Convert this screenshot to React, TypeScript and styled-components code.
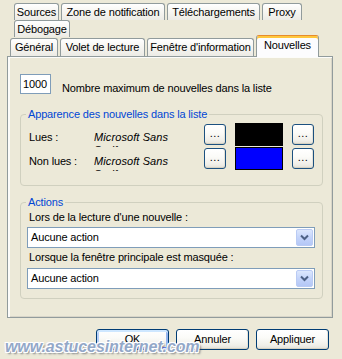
import React from "react";
import styled, { createGlobalStyle } from "styled-components";

const Global = createGlobalStyle`
  html, body { margin: 0; padding: 0; background: #ECE9D8; }
  body { font-family: "Liberation Sans", Arial, sans-serif; font-size: 11px; color: #000; letter-spacing: -0.15px; }
  * { box-sizing: border-box; }
`;

const Dialog = styled.div`
  position: relative;
  width: 342px;
  height: 359px;
  background: #ECE9D8;
  padding-top: 3px;
  overflow: hidden;
`;

const TabRow = styled.div<{ $left: number; $front?: boolean }>`
  display: flex;
  align-items: flex-end;
  gap: 2px;
  padding-left: ${(p) => p.$left}px;
  height: ${(p) => (p.$front ? 21 : 17)}px;
  margin-top: ${(p) => (p.$front ? -2 : 0)}px;
  position: relative;
  z-index: ${(p) => (p.$front ? 2 : 1)};
`;

const Tab = styled.div<{ $w: number; $h?: number }>`
  width: ${(p) => p.$w}px;
  height: ${(p) => p.$h ?? 17}px;
  border: 1px solid #919B9C;
  border-bottom: none;
  border-radius: 3px 3px 0 0;
  background: linear-gradient(180deg, #FFFFFF 0%, #F7F6F2 45%, #ECEBE5 100%);
  display: flex;
  align-items: center;
  justify-content: center;
  line-height: 13px;
  white-space: nowrap;
`;

const ActiveTab = styled.div<{ $w: number }>`
  width: ${(p) => p.$w}px;
  height: 22px;
  margin-bottom: -1px;
  border: 1px solid #919B9C;
  border-top: 1px solid #E68B2C;
  border-bottom: none;
  border-radius: 3px 3px 0 0;
  box-shadow: inset 0 2px 0 #FFC73C;
  background: #FCFCFE;
  display: flex;
  justify-content: center;
  padding-top: 3px;
  line-height: 13px;
  white-space: nowrap;
`;

const Panel = styled.div`
  margin-left: 7px;
  width: 326px;
  height: 262px;
  border: 1px solid #919B9C;
  box-shadow: inset 2px 1px 0 #FCFCFA, inset -1px -1px 0 #D8D5C8;
  background: #ECE9D8;
`;

const MaxRow = styled.div`
  display: flex;
  align-items: flex-start;
  padding: 17px 0 0 12px;
`;

const NumberBox = styled.div`
  width: 31px;
  height: 20px;
  border: 1px solid #7F9DB9;
  background: #fff;
  padding: 2px 0 0 2px;
  line-height: 14px;
`;

const Label = styled.div<{ $top?: number; $left?: number }>`
  margin-top: ${(p) => p.$top ?? 0}px;
  margin-left: ${(p) => p.$left ?? 0}px;
  line-height: 13px;
  white-space: nowrap;
`;

const Group = styled.fieldset<{ $top: number; $pl: number; $pr: number; $pb: number }>`
  margin: ${(p) => p.$top}px 9px 0 12px;
  border: 1px solid #D0D0BF;
  border-radius: 4px;
  padding: 2px ${(p) => p.$pr}px ${(p) => p.$pb}px ${(p) => p.$pl}px;
  min-width: 0;
`;

const Legend = styled.legend<{ $ml: number }>`
  color: #0046D5;
  line-height: 14px;
  padding: 0 2px;
  margin-left: ${(p) => p.$ml}px;
`;

const StyleGrid = styled.div`
  display: grid;
  grid-template-columns: 65px 110px 31px 57px 22px;
  grid-auto-rows: 23px;
  row-gap: 1px;
`;

const RowLabel = styled.div`
  padding-top: 8px;
  line-height: 13px;
  white-space: nowrap;
`;

const FontName = styled.div`
  margin-top: 8px;
  width: 80px;
  height: 16px;
  overflow: hidden;
  font-style: italic;
  line-height: 13px;
  letter-spacing: 0.1px;
`;

const XPButton = styled.div<{ $w: number; $h: number; $default?: boolean }>`
  width: ${(p) => p.$w}px;
  height: ${(p) => p.$h}px;
  border: 1px solid #003C74;
  border-radius: 3px;
  background: linear-gradient(180deg, #FFFFFF 0%, #FBFBF8 40%, #F0EFE9 80%, #E3E1D8 100%);
  box-shadow: ${(p) =>
    p.$default
      ? "inset 0 2px 0 #CEE7FF, inset 0 -2px 0 #6982EE, inset 2px 0 0 #B6CFF8, inset -2px 0 0 #94B4EE"
      : "inset 0 -1px 0 #D6D2C2, inset -1px 0 0 #E4E2D8"};
  display: flex;
  align-items: center;
  justify-content: center;
  line-height: 13px;
`;

const SmallButton = styled(XPButton)`
  margin-top: 1px;
  border-color: #1C5180;
  align-items: flex-end;
  padding-bottom: 4px;
  letter-spacing: 0.5px;
`;

const Swatch = styled.div<{ $color: string }>`
  width: 48px;
  height: 23px;
  background: ${(p) => p.$color};
  border: 1px solid #000;
`;

const Select = styled.div<{ $top: number }>`
  margin-top: ${(p) => p.$top}px;
  height: 21px;
  border: 1px solid #7F9DB9;
  background: #fff;
  display: flex;
  align-items: center;
  justify-content: space-between;
  padding: 0 1px 0 3px;
  line-height: 13px;
`;

const DropButton = styled.div`
  width: 17px;
  height: 17px;
  border-radius: 2px;
  background: linear-gradient(180deg, #DCE7FD 0%, #C4D4FA 50%, #B4C7F6 100%);
  border: 1px solid #BACBF4;
  display: flex;
  align-items: center;
  justify-content: center;
`;

const ButtonBar = styled.div`
  display: flex;
  justify-content: flex-end;
  gap: 7px;
  margin-top: 11px;
  padding-right: 13px;
`;

const Watermark = styled.div`
  position: absolute;
  left: 5px;
  top: 339px;
  font-family: "Liberation Sans", Arial, sans-serif;
  font-size: 16px;
  font-weight: bold;
  font-style: italic;
  letter-spacing: -0.1px;
  line-height: 16px;
  color: #93A8C8;
  text-shadow: -1px -1px 0 #fff, 1px -1px 0 #fff, -1px 1px 0 #fff, 1px 1px 0 #fff,
    0 -1px 0 #fff, 0 1px 0 #fff, 2px 2px 2px rgba(40, 50, 70, 0.55);
  white-space: nowrap;
`;

const Chevron = () => (
  <svg width="9" height="7" viewBox="0 0 9 7">
    <path d="M1 1.5 L4.5 5 L8 1.5" fill="none" stroke="#4D6185" strokeWidth="2" />
  </svg>
);

export default function App() {
  return (
    <>
      <Global />
      <Dialog>
        <TabRow $left={14}>
          <Tab $w={45}>Sources</Tab>
          <Tab $w={104}>Zone de notification</Tab>
          <Tab $w={93}>Téléchargements</Tab>
          <Tab $w={40}>Proxy</Tab>
        </TabRow>
        <TabRow $left={14}>
          <Tab $w={56}>Débogage</Tab>
        </TabRow>
        <TabRow $left={10} $front>
          <Tab $w={48} $h={18}>Général</Tab>
          <Tab $w={85} $h={18}>Volet de lecture</Tab>
          <Tab $w={107} $h={18}>Fenêtre d'information</Tab>
          <ActiveTab $w={63}>Nouvelles</ActiveTab>
        </TabRow>
        <Panel>
          <MaxRow>
            <NumberBox>1000</NumberBox>
            <Label $top={8} $left={11}>Nombre maximum de nouvelles dans la liste</Label>
          </MaxRow>
          <Group $top={12} $pl={8} $pr={8} $pb={15}>
            <Legend $ml={-3}>Apparence des nouvelles dans la liste</Legend>
            <StyleGrid>
              <RowLabel>Lues :</RowLabel>
              <FontName>Microsoft Sans Serif</FontName>
              <SmallButton $w={22} $h={21}>...</SmallButton>
              <Swatch $color="#000000" />
              <SmallButton $w={22} $h={21}>...</SmallButton>
              <RowLabel>Non lues :</RowLabel>
              <FontName>Microsoft Sans Serif</FontName>
              <SmallButton $w={22} $h={21}>...</SmallButton>
              <Swatch $color="#0000FF" />
              <SmallButton $w={22} $h={21}>...</SmallButton>
            </StyleGrid>
          </Group>
          <Group $top={9} $pl={6} $pr={7} $pb={9}>
            <Legend $ml={-1}>Actions</Legend>
            <Label $left={2}>Lors de la lecture d'une nouvelle :</Label>
            <Select $top={3}>
              <span>Aucune action</span>
              <DropButton><Chevron /></DropButton>
            </Select>
            <Label $top={3} $left={2}>Lorsque la fenêtre principale est masquée :</Label>
            <Select $top={4}>
              <span>Aucune action</span>
              <DropButton><Chevron /></DropButton>
            </Select>
          </Group>
        </Panel>
        <ButtonBar>
          <XPButton $w={73} $h={21} $default>OK</XPButton>
          <XPButton $w={73} $h={21}>Annuler</XPButton>
          <XPButton $w={73} $h={21}>Appliquer</XPButton>
        </ButtonBar>
        <Watermark>www.astucesinternet.com</Watermark>
      </Dialog>
    </>
  );
}
